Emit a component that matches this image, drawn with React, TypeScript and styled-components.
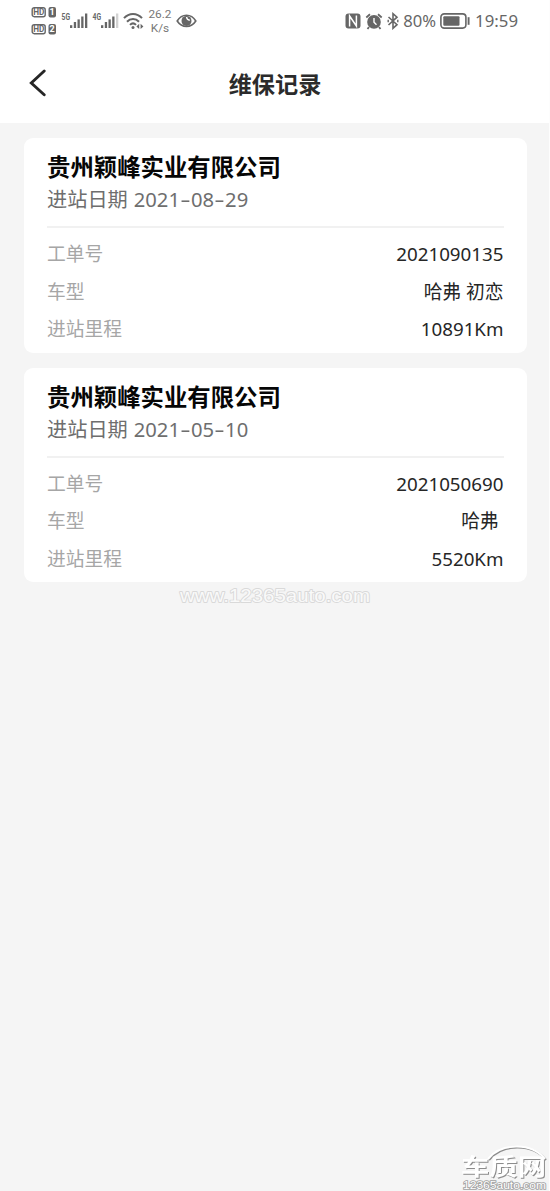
import React from "react";
import styled, { createGlobalStyle } from "styled-components";

const Global = createGlobalStyle`
  * { box-sizing: border-box; }
  body { margin: 0; background: #f5f5f5; }
`;

const Page = styled.div`
  position: relative;
  width: 550px;
  height: 1191px;
  overflow: hidden;
  border-right: 1px solid #fdfdfd;
  background: #f5f5f5;
  font-family: "Noto Sans", "Noto Sans CJK SC", sans-serif;
  color: #222;
`;

const StatusBar = styled.header`
  display: flex;
  justify-content: space-between;
  height: 43px;
  padding: 0 31px;
  background: #fff;
  color: #666;
`;

const StatusGroup = styled.div<{ $gap?: number }>`
  display: flex;
  align-items: center;
  gap: ${(p) => p.$gap ?? 4}px;
  height: 42px;
`;

const StatusText = styled.span<{ $size: number }>`
  padding-top: 1px;
  font-size: ${(p) => p.$size}px;
  line-height: 1;
  white-space: nowrap;
`;

const Speed = styled.div`
  width: 24px;
  font: 11.8px/14px Roboto, sans-serif;
  text-align: center;
  white-space: nowrap;
  color: #777;
`;

const NavBar = styled.nav`
  display: grid;
  grid-template-columns: 60px 1fr 60px;
  align-items: center;
  height: 80px;
  background: #fff;
`;

const BackButton = styled.button`
  display: flex;
  padding: 0 0 0 27px;
  border: 0;
  background: none;
`;

const Title = styled.h1`
  margin: 0;
  padding: 1px 0 0 1px;
  font-size: 23.2px;
  font-weight: 700;
  line-height: 34px;
  text-align: center;
  color: #2b2b2b;
`;

const List = styled.main`
  display: flex;
  flex-direction: column;
  gap: 15px;
  padding: 15px 22px 0 24px;
`;

const Card = styled.article`
  height: 214.5px;
  padding: 13px 23px 0;
  border-radius: 9px;
  background: #fff;
`;

const Company = styled.h2`
  margin: 0;
  font-size: 23.4px;
  font-weight: 700;
  line-height: 33px;
  white-space: nowrap;
  color: #060606;
`;

const Visit = styled.div`
  display: flex;
  gap: 6px;
  height: 44px;
  border-bottom: 2px solid #f1f1f1;
  font-size: 20.2px;
  line-height: 31px;
  color: #6e6e6e;
`;

const Dash = styled.span`
  display: inline-block;
  width: 11px;
  text-align: center;
  transform: scaleX(1.6);
`;

const Rows = styled.dl`
  margin: 7px 0 0;
`;

const Row = styled.div`
  display: flex;
  justify-content: space-between;
  height: 37.6px;
  font-size: 18.75px;
  line-height: 37.6px;
`;

const Label = styled.dt`
  color: #a6a6a6;
`;

const Value = styled.dd`
  margin: 0 0.5px 0 0;
  white-space: pre;
  color: #262626;
`;

const Watermark = styled.svg`
  position: absolute;
  left: 176px;
  top: 584px;
`;

const SiteLogo = styled.svg`
  position: absolute;
  right: 0;
  bottom: 0;
`;

const LogoWord = styled.g`
  filter: drop-shadow(1px 1px 0.6px #8c8c8c);
`;

const HdIcon = () => (
  <svg width="26" height="30" viewBox="0 0 26 30">
    {[1, 2].map((n) => {
      const y = n === 1 ? 1 : 18;
      return (
        <g key={n}>
          <rect x="1.2" y={y + 0.7} width="13" height="9" rx="2" fill="#fff" stroke="#666" strokeWidth="1.4" />
          <text x="7.7" y={y + 8.2} fontFamily="Roboto" fontWeight="700" fontSize="8.2" textAnchor="middle" fill="#666">HD</text>
          <rect x="17.5" y={y} width="7.5" height="10.4" rx="2" fill="#666" />
          <text x="21.2" y={y + 8.4} fontFamily="Roboto" fontWeight="700" fontSize="9" textAnchor="middle" fill="#fff">{n}</text>
        </g>
      );
    })}
  </svg>
);

const SignalIcon = ({ label, weak }: { label: string; weak?: boolean }) => (
  <svg width="27" height="20" viewBox="0 0 27 20">
    <text x="0.5" y="8.5" fontFamily="Roboto" fontWeight="700" fontSize="8.5" textLength="8.5" lengthAdjust="spacingAndGlyphs" fill="#666">{label}</text>
    <rect x="9" y="14.2" width="2.3" height="2.8" fill="#666" />
    <rect x="12.8" y="11" width="2.3" height="6" fill="#666" />
    <rect x="16.5" y="8.4" width="2.3" height="8.6" fill="#666" />
    <rect x="20.2" y="5.5" width="2.3" height="11.5" fill="#666" />
    <rect x="24" y="2.5" width="2.3" height="14.5" fill={weak ? "#d2d2d2" : "#666"} />
  </svg>
);

const WifiIcon = () => (
  <svg width="21" height="18" viewBox="0 0 21 18" fill="none" stroke="#666" strokeWidth="2">
    <path d="M1 6.2C6 .6 14 .6 19 6.2M4 9.7c3.4-3.7 8.6-3.7 12 0M7 12.9c1.8-1.8 4.2-1.8 6 0" />
    <circle cx="10" cy="15.5" r="1.5" fill="#666" stroke="none" />
    <path d="M16.2 11.8l-2.8 2.6 2.8 2.6zM17.6 11.8l2.8 2.6-2.8 2.6z" fill="#666" stroke="none" />
  </svg>
);

const EyeIcon = () => (
  <svg width="21" height="16" viewBox="0 0 21 16">
    <path d="M1.2 8C5.8.3 15.2.3 19.8 8 15.2 15.2 5.8 15.2 1.2 8z" fill="#fff" stroke="#666" strokeWidth="1.6" />
    <circle cx="10.5" cy="7.9" r="5" fill="#666" />
    <path d="M10.6 4a3.4 3.4 0 0 0 3.2 3.2" fill="none" stroke="#fff" strokeWidth="1.4" />
  </svg>
);

const NfcIcon = () => (
  <svg width="16" height="16" viewBox="0 0 16 16">
    <rect x=".5" y=".5" width="15" height="15" rx="3" fill="#666" />
    <path d="M4.6 13.5V3L11.4 13V2.5" fill="none" stroke="#fff" strokeWidth="1.5" />
  </svg>
);

const AlarmIcon = () => (
  <svg width="18" height="17" viewBox="0 0 18 17">
    <circle cx="9" cy="8.9" r="6.8" fill="#666" />
    <path d="M1.3 4.5L5 1.3M13 1.3l3.7 3.2M4 14l-1.5 2M14 14l1.5 2" stroke="#666" strokeWidth="1.8" />
    <path d="M9 5v4.2l2.5 2.5" fill="none" stroke="#fff" strokeWidth="1.4" />
  </svg>
);

const BluetoothIcon = () => (
  <svg width="12" height="18" viewBox="0 0 12 18">
    <path d="M1.5 5L10 12.7 6 16.3V1.7L10 5.2 1.5 13" fill="none" stroke="#666" strokeWidth="1.6" />
    <path d="M1.2 7.8v2.4M10.8 7.8v2.4" stroke="#666" strokeWidth="1.4" />
  </svg>
);

const BatteryIcon = () => (
  <svg width="31" height="16" viewBox="0 0 31 16">
    <rect x=".9" y=".9" width="25" height="14.2" rx="3.3" fill="none" stroke="#666" strokeWidth="1.6" />
    <rect x="3.3" y="3.3" width="16.2" height="9.4" rx="1" fill="#666" />
    <path d="M28.6 4.2v7.6" stroke="#666" strokeWidth="1.9" />
  </svg>
);

type RecordData = { date: string; order: string; model: string; mileage: string };

const records: RecordData[] = [
  { date: "2021-08-29", order: "2021090135", model: "哈弗 初恋", mileage: "10891Km" },
  { date: "2021-05-10", order: "2021050690", model: "哈弗 ", mileage: "5520Km" },
];

const RecordCard = ({ date, order, model, mileage }: RecordData) => (
  <Card>
    <Company>贵州颖峰实业有限公司</Company>
    <Visit>
      <span>进站日期</span>
      <span>
        {date.split("-").map((part, i) => (
          <React.Fragment key={i}>
            {i > 0 && <Dash>-</Dash>}
            {part}
          </React.Fragment>
        ))}
      </span>
    </Visit>
    <Rows>
      <Row><Label>工单号</Label><Value>{order}</Value></Row>
      <Row><Label>车型</Label><Value>{model}</Value></Row>
      <Row><Label>进站里程</Label><Value>{mileage}</Value></Row>
    </Rows>
  </Card>
);

export default function App() {
  return (
    <Page>
      <Global />
      <StatusBar>
        <StatusGroup>
          <HdIcon />
          <SignalIcon label="5G" />
          <SignalIcon label="4G" weak />
          <WifiIcon />
          <Speed>26.2<br />K/s</Speed>
          <EyeIcon />
        </StatusGroup>
        <StatusGroup $gap={4}>
          <NfcIcon />
          <AlarmIcon />
          <BluetoothIcon />
          <StatusText $size={16.6}>80%</StatusText>
          <BatteryIcon />
          <StatusText $size={16.8}>19:59</StatusText>
        </StatusGroup>
      </StatusBar>
      <NavBar>
        <BackButton aria-label="返回">
          <svg width="22" height="28" viewBox="0 0 22 28" fill="none" stroke="#262626" strokeWidth="2.9">
            <path d="M17.2 2L4.3 14l12.9 11.8" strokeLinecap="round" />
          </svg>
        </BackButton>
        <Title>维保记录</Title>
      </NavBar>
      <List>
        {records.map((r) => <RecordCard key={r.order} {...r} />)}
      </List>
      <Watermark width="200" height="24" viewBox="0 0 200 24">
        <text x="4" y="18" fontFamily="Liberation Sans" fontSize="18.5" textLength="190" lengthAdjust="spacingAndGlyphs" fill="#f9f9f9" stroke="#d9d9d9" strokeWidth="1.8" strokeLinejoin="round" paintOrder="stroke">www.12365auto.com</text>
      </Watermark>
      <SiteLogo width="92" height="50" viewBox="0 0 92 50">
        <LogoWord>
          <path d="M31 18C44 2 74 1 88 18" fill="none" stroke="#fff" strokeWidth="2" />
          <text x="4" y="34" fontFamily="Noto Sans CJK SC" fontWeight="700" fontSize="23" textLength="85" lengthAdjust="spacingAndGlyphs" fill="#fff">车质网</text>
        </LogoWord>
        <text x="6" y="47.5" fontFamily="Liberation Sans" fontSize="10.5" textLength="83" lengthAdjust="spacingAndGlyphs" fill="#fff" stroke="#a2a2a2" strokeWidth="1.6" paintOrder="stroke">12365auto.com</text>
      </SiteLogo>
    </Page>
  );
}
